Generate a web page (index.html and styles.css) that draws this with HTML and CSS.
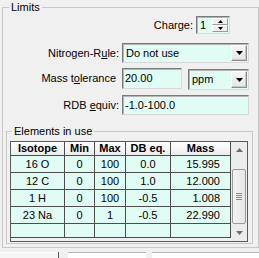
FILE: index.html
```html
<!DOCTYPE html>
<html lang="en">
<head>
    <meta charset="UTF-8">
    <meta name="viewport" content="width=device-width, initial-scale=1.0">
    <title>Limits</title>
    <link rel="stylesheet" href="styles.css">
</head>
<body>
    <fieldset class="group limits">
        <legend>Limits</legend>

        <!-- Charge -->
        <div class="row row-charge">
            <div class="label label-charge">Char<u>g</u>e:</div>
            <div class="spin">
                <div class="spin-value">1</div>
                <div class="spin-buttons">
                    <div class="spin-btn">
                        <svg width="5" height="3" viewBox="0 0 5 3"><path d="M2.5 0 L5 3 L0 3 Z" fill="#000"/></svg>
                    </div>
                    <div class="spin-btn">
                        <svg width="5" height="3" viewBox="0 0 5 3"><path d="M0 0 L5 0 L2.5 3 Z" fill="#000"/></svg>
                    </div>
                </div>
            </div>
        </div>

        <!-- Nitrogen rule -->
        <div class="row row-nitrogen">
            <div class="label">Nitrogen-R<u>u</u>le:</div>
            <div class="combo combo-wide">
                <div class="combo-text">Do not use</div>
                <div class="combo-btn">
                    <svg width="7" height="4" viewBox="0 0 7 4"><path d="M0 0 L7 0 L3.5 4 Z" fill="#000"/></svg>
                </div>
            </div>
        </div>

        <!-- Mass tolerance -->
        <div class="row row-mass">
            <div class="label label-nocolon">Mass t<u>o</u>lerance</div>
            <div class="edit edit-short">20.00</div>
            <div class="combo combo-unit">
                <div class="combo-text">ppm</div>
                <div class="combo-btn">
                    <svg width="7" height="4" viewBox="0 0 7 4"><path d="M0 0 L7 0 L3.5 4 Z" fill="#000"/></svg>
                </div>
            </div>
        </div>

        <!-- RDB -->
        <div class="row row-rdb">
            <div class="label">RDB <u>e</u>quiv:</div>
            <div class="edit edit-wide">-1.0-100.0</div>
        </div>

        <fieldset class="group elements">
            <legend>Elements in use</legend>

            <div class="grid-box">
                <div class="grid">
                    <div class="head">Isotope</div>
                    <div class="head">Min</div>
                    <div class="head">Max</div>
                    <div class="head">DB eq.</div>
                    <div class="head">Mass</div>

                    <div class="cell">16 O</div>
                    <div class="cell">0</div>
                    <div class="cell">100</div>
                    <div class="cell">0.0</div>
                    <div class="cell num">15.995</div>

                    <div class="cell">12 C</div>
                    <div class="cell">0</div>
                    <div class="cell">100</div>
                    <div class="cell">1.0</div>
                    <div class="cell num">12.000</div>

                    <div class="cell">1 H</div>
                    <div class="cell">0</div>
                    <div class="cell">100</div>
                    <div class="cell">-0.5</div>
                    <div class="cell num">1.008</div>

                    <div class="cell">23 Na</div>
                    <div class="cell">0</div>
                    <div class="cell">1</div>
                    <div class="cell">-0.5</div>
                    <div class="cell num">22.990</div>

                    <div class="cell"></div>
                    <div class="cell"></div>
                    <div class="cell"></div>
                    <div class="cell"></div>
                    <div class="cell"></div>
                </div>

                <div class="scrollbar">
                    <div class="sb-arrow">
                        <svg width="7" height="4" viewBox="0 0 7 4"><path d="M3.5 0 L7 4 L0 4 Z" fill="#6e6e6e"/></svg>
                    </div>
                    <div class="sb-track-top"></div>
                    <div class="sb-thumb">
                        <div class="grip"></div>
                        <div class="grip"></div>
                        <div class="grip"></div>
                        <div class="grip"></div>
                    </div>
                    <div class="sb-track-bottom"></div>
                    <div class="sb-arrow">
                        <svg width="7" height="4" viewBox="0 0 7 4"><path d="M0 0 L7 0 L3.5 4 Z" fill="#6e6e6e"/></svg>
                    </div>
                </div>
            </div>
        </fieldset>
    </fieldset>

    <!-- cut-off controls below -->
    <div class="bottom-bar">
        <div class="stub stub-a"></div>
        <div class="stub-tick"></div>
        <div class="stub stub-b"></div>
        <div class="stub stub-c"></div>
    </div>
</body>
</html>
```

FILE: styles.css
```css
* {
    box-sizing: border-box;
    margin: 0;
    padding: 0;
}

body {
    font-family: "Liberation Sans", Arial, sans-serif;
    font-size: 11px;
    line-height: 13px;
    color: #000;
    background-color: #f0f0f0;
    width: 259px;
    height: 258px;
    overflow: hidden;
}

u {
    text-decoration: underline;
    text-underline-offset: 1px;
}

/* Group boxes */
.group {
    border: 1px solid #c8c8c8;
    min-width: 0;
}

.group legend {
    padding: 0 2px;
    line-height: 13px;
}

.limits {
    margin: 1px 0 0 2px;
    width: 257px;
    height: 247px;
}

.limits > legend {
    margin-left: 6px;
}

.elements {
    margin: 10px 0 0 3px;
    width: 247px;
    height: 119px;
}

.elements > legend {
    margin-left: 5px;
}

/* Form rows */
.row {
    display: flex;
    align-items: center;
}

.label {
    width: 116px;
    margin-right: 3px;
    text-align: right;
    white-space: nowrap;
}

.label-charge {
    width: 190px;
}

.label-nocolon {
    padding-right: 3px;
}

.row-charge {
    margin-top: 2px;
    height: 18px;
}

.row-nitrogen {
    margin-top: 9px;
    height: 20px;
}

.row-mass {
    margin-top: 5px;
    height: 21px;
}

.row-rdb {
    margin-top: 6px;
    height: 20px;
}

/* Fields */
.edit,
.combo,
.spin {
    background: #e1fcf4;
    border: 1px solid;
    border-color: #7a7a7a #d8d8d8 #d8d8d8 #7a7a7a;
    box-shadow: inset 1px 1px 0 #b4b4b4;
    white-space: nowrap;
}

.edit {
    height: 20px;
    padding: 3px 0 0 2px;
}

.edit-short {
    width: 60px;
    height: 21px;
}

.edit-wide {
    width: 127px;
}

.spin {
    display: flex;
    width: 34px;
    height: 18px;
    padding: 1px 1px 1px 0;
}

.spin-value {
    flex: 1;
    padding: 1px 0 0 3px;
}

.spin-buttons {
    width: 16px;
    display: flex;
    flex-direction: column;
}

.spin-btn {
    flex: 1;
    display: flex;
    align-items: center;
    justify-content: center;
    background: #f0f0f0;
    border: 1px solid;
    border-color: #ffffff #9a9a9a #9a9a9a #ffffff;
}

.combo {
    display: flex;
    height: 20px;
    padding: 1px;
}

.combo-wide {
    width: 127px;
}

.combo-unit {
    width: 61px;
    height: 21px;
    margin-left: 6px;
    margin-top: 2px;
}

.combo-text {
    flex: 1;
    padding: 2px 0 0 2px;
}

.combo-btn {
    width: 16px;
    display: flex;
    align-items: center;
    justify-content: center;
    background: linear-gradient(#f6f6f6, #e6e6e6);
    border: 1px solid;
    border-color: #ffffff #8e8e8e #8e8e8e #ffffff;
    box-shadow: inset -1px -1px 0 #c8c8c8;
}

/* Elements table */
.grid-box {
    display: flex;
    margin: 3px 0 0 3px;
    width: 238px;
    height: 101px;
    border: 1px solid #5a5a5a;
    background: #f0f0f0;
}

.grid {
    display: grid;
    grid-template-columns: 53px 29px 30px 44px 59px;
    grid-template-rows: 13px repeat(4, 16px) 13px;
    gap: 1px;
    padding: 0 1px 1px 0;
    background: #4d4d4d;
    align-self: flex-start;
}

.head {
    background: linear-gradient(#ffffff, #ececec);
    font-weight: bold;
    text-align: center;
    line-height: 13px;
}

.cell {
    background: #e1fcf4;
    text-align: center;
    line-height: 16px;
}

.cell.num {
    text-align: right;
    padding-right: 10px;
}

.scrollbar {
    width: 16px;
    display: flex;
    flex-direction: column;
    background: #ececec;
}

.sb-arrow {
    height: 16px;
    display: flex;
    align-items: center;
    justify-content: center;
}

.sb-track-top {
    height: 11px;
}

.sb-track-bottom {
    height: 1px;
}

.sb-thumb {
    height: 55px;
    margin: 0 1px;
    border: 1px solid #9b9b9b;
    border-radius: 2px;
    background: linear-gradient(90deg, #f4f4f4, #e6e6e6);
    display: flex;
    flex-direction: column;
    align-items: center;
    justify-content: center;
    gap: 1px;
}

.grip {
    width: 6px;
    height: 1px;
    background: #8a8a8a;
}

/* Controls cut off at the bottom edge */
.bottom-bar {
    display: flex;
    margin-top: 4px;
    height: 8px;
}

.stub {
    height: 8px;
    background: #ffffff;
    border-top: 1px solid #b4b4b4;
}

.stub-a {
    width: 58px;
    background: #f6f6f6;
    border-top-color: #ffffff;
}

.stub-tick {
    width: 1px;
    height: 8px;
    background: #555;
}

.stub-b {
    width: 78px;
    margin-left: 9px;
}

.stub-c {
    width: 107px;
    margin-left: 6px;
}
```
